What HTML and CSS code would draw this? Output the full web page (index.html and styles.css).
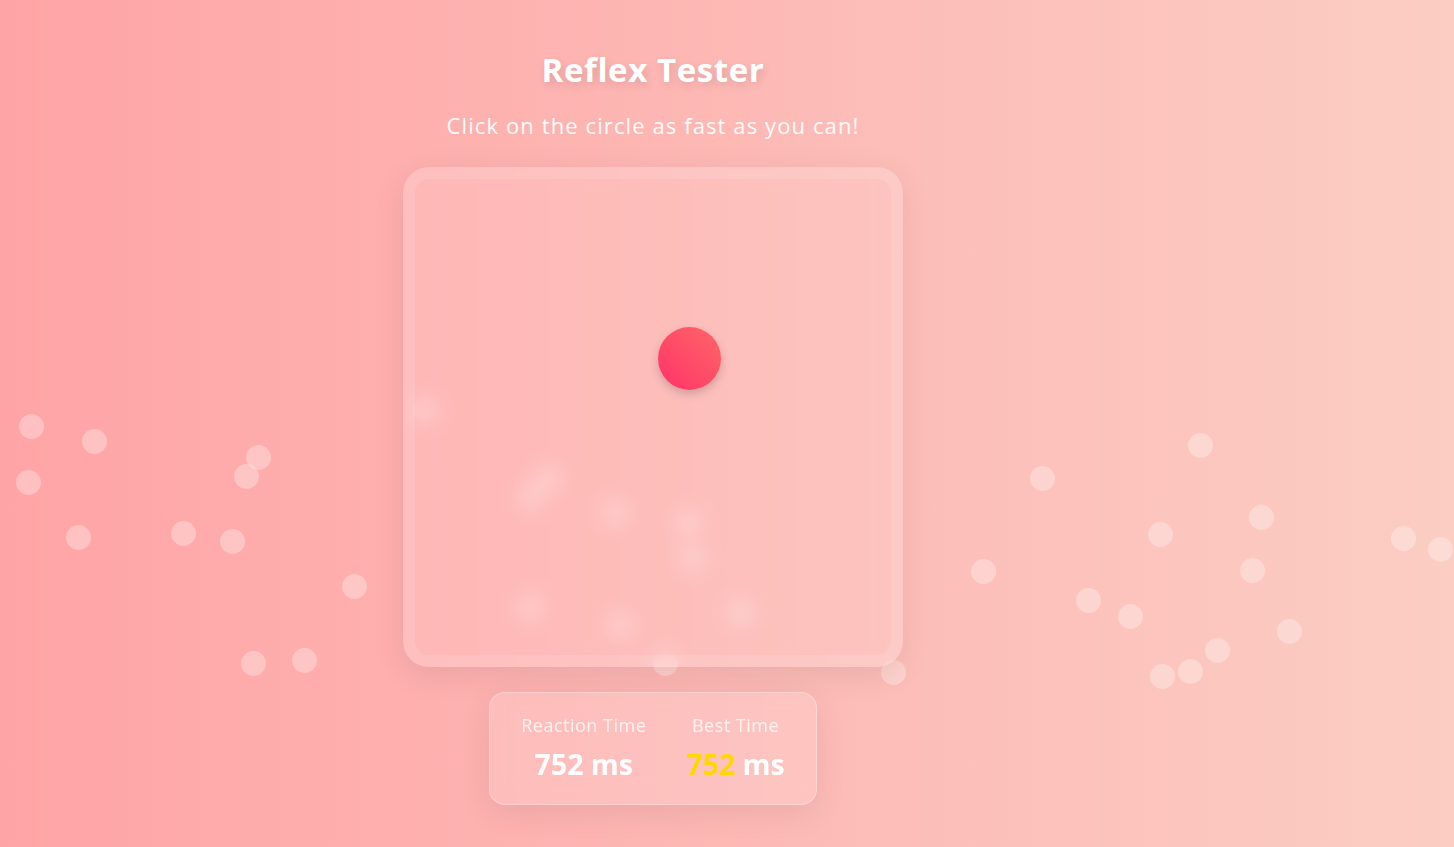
FILE: index.html
```html
<!DOCTYPE html>
<html lang="en">
<head>
<meta charset="utf-8">
<title>Reflex Tester</title>
<link rel="stylesheet" href="styles.css">
</head>
<body>
<div class="particles">
  <span class="dot" style="left:19px;top:414px"></span>
  <span class="dot" style="left:82px;top:429px"></span>
  <span class="dot" style="left:16px;top:470px"></span>
  <span class="dot" style="left:66px;top:525px"></span>
  <span class="dot" style="left:171px;top:521px"></span>
  <span class="dot" style="left:220px;top:529px"></span>
  <span class="dot" style="left:246px;top:445px"></span>
  <span class="dot" style="left:234px;top:464px"></span>
  <span class="dot" style="left:342px;top:574px"></span>
  <span class="dot" style="left:241px;top:651px"></span>
  <span class="dot" style="left:292px;top:648px"></span>
  <span class="dot" style="left:413px;top:398px"></span>
  <span class="dot" style="left:536px;top:466px"></span>
  <span class="dot" style="left:518px;top:484px"></span>
  <span class="dot" style="left:603px;top:500px"></span>
  <span class="dot" style="left:676px;top:510px"></span>
  <span class="dot" style="left:680px;top:545px"></span>
  <span class="dot" style="left:518px;top:595px"></span>
  <span class="dot" style="left:608px;top:613px"></span>
  <span class="dot" style="left:728px;top:600px"></span>
  <span class="dot" style="left:653px;top:651px"></span>
  <span class="dot" style="left:881px;top:660px"></span>
  <span class="dot" style="left:1188px;top:433px"></span>
  <span class="dot" style="left:1030px;top:466px"></span>
  <span class="dot" style="left:1148px;top:522px"></span>
  <span class="dot" style="left:1249px;top:505px"></span>
  <span class="dot" style="left:971px;top:559px"></span>
  <span class="dot" style="left:1240px;top:558px"></span>
  <span class="dot" style="left:1076px;top:588px"></span>
  <span class="dot" style="left:1118px;top:604px"></span>
  <span class="dot" style="left:1277px;top:619px"></span>
  <span class="dot" style="left:1205px;top:638px"></span>
  <span class="dot" style="left:1178px;top:659px"></span>
  <span class="dot" style="left:1150px;top:664px"></span>
  <span class="dot" style="left:1391px;top:526px"></span>
  <span class="dot" style="left:1428px;top:537px"></span>
</div>
<main class="app">
  <h1 class="title">Reflex Tester</h1>
  <p class="subtitle">Click on the circle as fast as you can!</p>
  <div class="game">
    <div class="target" style="left:243px;top:148px"></div>
  </div>
  <div class="stats">
    <div class="stat">
      <div class="stat-label">Reaction Time</div>
      <div class="stat-value">752 ms</div>
    </div>
    <div class="stat">
      <div class="stat-label">Best Time</div>
      <div class="stat-value"><span class="best">752</span> ms</div>
    </div>
  </div>
</main>
</body>
</html>
```

FILE: styles.css
```css
* { box-sizing: border-box; }

html, body {
  margin: 0;
  height: 100%;
}

body {
  position: relative;
  overflow: hidden;
  min-height: 100vh;
  background: linear-gradient(90deg, #ffa4a6 0%, #fbcdc3 100%);
  font-family: "Open Sans", "Noto Sans", sans-serif;
  color: #fff;
}

.particles {
  position: absolute;
  inset: 0;
  z-index: 0;
}

.dot {
  position: absolute;
  width: 25px;
  height: 25px;
  border-radius: 50%;
  background: rgba(255, 255, 255, 0.3);
}

.app {
  position: relative;
  z-index: 1;
  display: flex;
  flex-direction: column;
  align-items: center;
  padding: 48px 148px 0 0;
}

.title {
  margin: 0;
  font-size: 33px;
  line-height: 44px;
  font-weight: 700;
  letter-spacing: 0.6px;
  text-shadow: 2px 4px 8px rgba(0, 0, 0, 0.12);
}

.subtitle {
  margin: 19px 0 0;
  font-size: 22px;
  line-height: 28px;
  font-weight: 400;
  letter-spacing: 1.1px;
  opacity: 0.95;
}

.game {
  position: relative;
  width: 500px;
  height: 500px;
  margin-top: 28px;
  border: 12px solid rgba(255, 255, 255, 0.2);
  border-radius: 26px;
  background: rgba(255, 255, 255, 0.1);
  backdrop-filter: blur(10px);
  box-shadow: 0 8px 32px rgba(0, 0, 0, 0.08);
  background-clip: padding-box;
}

.target {
  position: absolute;
  width: 63px;
  height: 63px;
  border-radius: 50%;
  background: linear-gradient(45deg, #ff3368, #ff6668);
  box-shadow: 0 4px 10px rgba(0, 0, 0, 0.18);
}

.stats {
  display: flex;
  gap: 40px;
  margin-top: 25px;
  padding: 20px 31px 22px;
  border: 1px solid rgba(255, 255, 255, 0.3);
  border-radius: 16px;
  background: rgba(255, 255, 255, 0.15);
  backdrop-filter: blur(10px);
  box-shadow: 0 8px 32px rgba(0, 0, 0, 0.08);
}

.stat {
  display: flex;
  flex-direction: column;
  align-items: center;
}

.stat-label {
  font-size: 18px;
  line-height: 24px;
  letter-spacing: 0.5px;
  color: rgba(255, 255, 255, 0.8);
}

.stat-value {
  margin-top: 9px;
  font-size: 28.5px;
  line-height: 36px;
  font-weight: 700;
}

.best {
  color: #ffd700;
}
```
